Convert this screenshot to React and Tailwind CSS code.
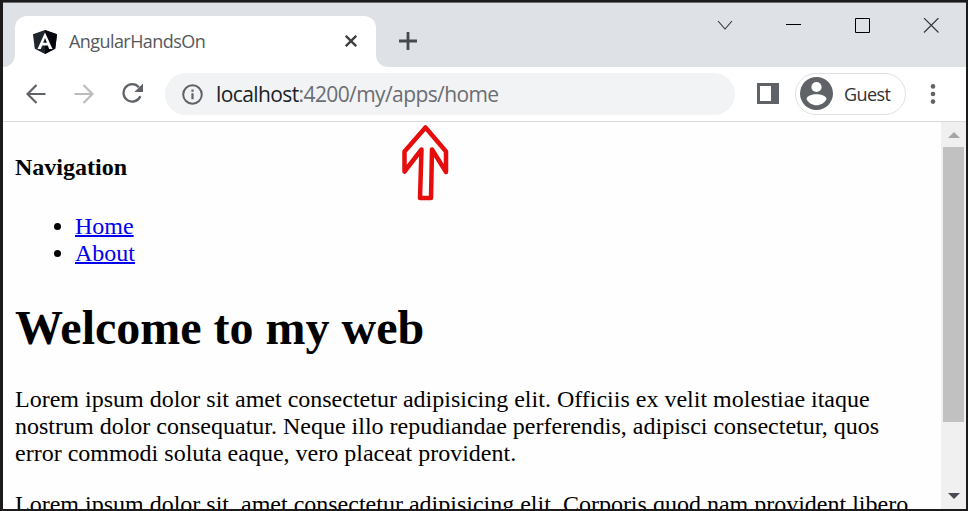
import React from 'react';

const ui = "font-['Open_Sans','Noto_Sans',sans-serif]";

function TabStrip() {
  return (
    <div className="flex h-16 shrink-0 bg-[#dee1e6]">
      <svg className="mt-[52px] h-3 w-3 shrink-0" viewBox="0 0 12 12">
        <path d="M12 0v12H0A12 12 0 0 0 12 0Z" fill="#fff" />
      </svg>
      <div className="mt-[13px] flex h-[51px] w-[361px] shrink-0 items-center rounded-t-xl bg-white">
        <svg className="ml-[18px] h-6 w-6 shrink-0" viewBox="0 0 24 24">
          <path d="M12 0 24 4.2l-1.8 14.5L12 24 1.8 18.7 0 4.2Z" fill="#20262d" />
          <path d="M12 0 24 4.2l-1.8 14.5L12 24Z" fill="#05060d" />
          <path fillRule="evenodd" d="M12 2.500 4.500 18.900h3.300l1.400-3.500h5.600l1.400 3.500h3.300Zm0 5.600 1.900 4.600h-3.800Z" fill="#fff" />
        </svg>
        <div className={`-mt-[2px] ml-3 w-[200px] whitespace-nowrap text-[18px] leading-6 tracking-[-0.57px] text-[#55585c] ${ui}`}>AngularHandsOn</div>
        <svg className="-mt-px ml-[76px] h-3 w-3 shrink-0" viewBox="0 0 12 12">
          <path d="m.8.800 10.400 10.400M11.200.800.800 11.200" stroke="#3c4043" strokeWidth="2.300" />
        </svg>
      </div>
      <svg className="mt-[52px] h-3 w-3 shrink-0" viewBox="0 0 12 12">
        <path d="M0 0v12h12A12 12 0 0 1 0 0Z" fill="#fff" />
      </svg>
      <svg className="ml-[11px] mt-[29px] h-[18px] w-[18px] shrink-0" viewBox="0 0 18 18">
        <path d="M9 0v18M0 9h18" stroke="#46494e" strokeWidth="2.800" />
      </svg>
      <svg className="ml-[300px] mt-[15px] h-4 w-[222px] shrink-0" viewBox="0 0 222 16" fill="none" stroke="#000">
        <path d="m1 3 7 8 7-8" stroke="#333" strokeWidth="1.1" />
        <path d="M69 6.500h15M138.500 .500h14v14h-14Z" />
        <path d="m207 0 14.500 14.500M221.500 0 207 14.500" stroke="#333" strokeWidth="1.1" />
      </svg>
    </div>
  );
}

function Toolbar() {
  return (
    <div className="flex h-[55px] shrink-0 items-center border-b border-[#d9dadc] bg-white">
      <svg className="-mt-px ml-[23px] h-5 w-5 shrink-0" viewBox="0 0 20 20" fill="none" stroke="#5f6368" strokeWidth="2.200">
        <path d="M19.500 10H1.500M10.500 1l-9 9 9 9" />
      </svg>
      <svg className="-mt-px ml-7 h-5 w-5 shrink-0" viewBox="0 0 20 20" fill="none" stroke="#babcbe" strokeWidth="2.200">
        <path d="M.500 10h18M9.500 1l9 9-9 9" />
      </svg>
      <svg className="-mt-px ml-7 h-[21px] w-[22px] shrink-0" viewBox="0 0 22 21">
        <path d="M18.300 13.200a8.700 8.700 0 1 1-1.500-9" fill="none" stroke="#5f6368" strokeWidth="2.300" />
        <path d="M21 .500v8.600h-8.600Z" fill="#5f6368" />
      </svg>
      <div className="ml-[21px] flex h-[42px] w-[570px] shrink-0 items-center rounded-full bg-[#f1f3f4]">
        <svg className="ml-[17px] h-[21px] w-[21px] shrink-0" viewBox="0 0 21 21">
          <circle cx="10.500" cy="10.500" r="9.300" fill="none" stroke="#5f6368" strokeWidth="2" />
          <path d="M9.400 9.300h2.200v6H9.400ZM9.400 5.500h2.200v2.200H9.400Z" fill="#5f6368" />
        </svg>
        <div className={`ml-[13px] whitespace-nowrap text-[21px] leading-7 tracking-[-0.6px] text-[#6a6d72] ${ui}`}>
          <span className="text-[#202124]">localhost</span>:4200/my/apps/home
        </div>
      </div>
      <svg className="-mt-px ml-[22px] h-[21px] w-[22px] shrink-0" viewBox="0 0 22 21">
        <path fillRule="evenodd" d="M0 0h22v21H0ZM3 3v15h11V3Z" fill="#5f6368" />
      </svg>
      <div className="ml-4 flex h-[42px] w-[111px] shrink-0 items-center rounded-full border border-[#dfe1e3]">
        <svg className="-mt-px ml-[4px] h-[33px] w-[33px] shrink-0" viewBox="0 0 33 33">
          <circle cx="16.500" cy="16.500" r="16.500" fill="#5f6368" />
          <circle cx="16.500" cy="10" r="5.100" fill="#fff" />
          <path d="M6.500 22.200C6.500 19.200 12 17.300 16.500 17.300s10 1.900 10 4.900c-2 3.700-6 6-10 6s-8-2.300-10-6Z" fill="#fff" />
        </svg>
        <div className={`ml-[11px] whitespace-nowrap text-[18px] leading-6 tracking-[-0.6px] text-[#303236] ${ui}`}>Guest</div>
      </div>
      <svg className="-mt-px ml-6 h-5 w-[6px] shrink-0" viewBox="0 0 6 20" fill="#5f6368">
        <circle cx="3" cy="2.400" r="2.300" />
        <circle cx="3" cy="10" r="2.300" />
        <circle cx="3" cy="17.600" r="2.300" />
      </svg>
    </div>
  );
}

function Scrollbar() {
  return (
    <div className="flex w-[25px] shrink-0 flex-col items-center bg-[#f0f0f0]">
      <svg className="mt-[10px] h-[6px] w-3 shrink-0" viewBox="0 0 12 6">
        <path d="M6 0 12 6H0Z" fill="#a3a8a3" />
      </svg>
      <div className="mt-[9px] h-[275px] w-[21px] shrink-0 bg-[#c1c1c1]" />
      <svg className="mt-[71px] h-[6px] w-3 shrink-0" viewBox="0 0 12 6">
        <path d="M0 0h12L6 6Z" fill="#4a4a55" />
      </svg>
    </div>
  );
}

export default function App() {
  return (
    <div className="relative flex h-[511px] w-[968px] flex-col overflow-hidden border-b-2 border-l-[3px] border-r-2 border-t-2 border-[#1c1a1b] bg-white">
      <div className="h-px shrink-0 bg-[#6b6b70]" />
      <TabStrip />
      <Toolbar />
      <div className="flex min-h-0 flex-1">
        <main className="min-w-0 flex-1 overflow-hidden whitespace-nowrap bg-[#fefefe] pl-3 pt-8 font-['Liberation_Serif','Times_New_Roman',serif] text-2xl leading-[27px] text-black">
          <h4 className="font-bold">Navigation</h4>
          <ul className="mt-8 list-disc pl-[60px]">
            <li><a className="text-[#0000ee] underline decoration-2">Home</a></li>
            <li><a className="text-[#0000ee] underline decoration-2">About</a></li>
          </ul>
          <h1 className="mt-[34px] text-5xl font-bold leading-[54px]">Welcome to my web</h1>
          <p className="mt-[31px]">
            <span className="block">Lorem ipsum dolor sit amet consectetur adipisicing elit. Officiis ex velit molestiae itaque</span>
            <span className="block">nostrum dolor consequatur. Neque illo repudiandae perferendis, adipisci consectetur, quos</span>
            <span className="block">error commodi soluta eaque, vero placeat provident.</span>
          </p>
          <p className="mt-6">Lorem ipsum dolor sit, amet consectetur adipisicing elit. Corporis quod nam provident libero</p>
        </main>
        <Scrollbar />
      </div>
      <svg className="absolute left-[397px] top-[122px] h-[78px] w-[50px]" viewBox="400 124 50 78">
        <path d="M425.500 127.500 446 151.500v20.500l-14-22.500-1 48.500h-11l1.500-48.500-17 22V151.500Z" fill="none" stroke="#e60d0d" strokeWidth="4.500" strokeLinejoin="round" />
      </svg>
    </div>
  );
}
